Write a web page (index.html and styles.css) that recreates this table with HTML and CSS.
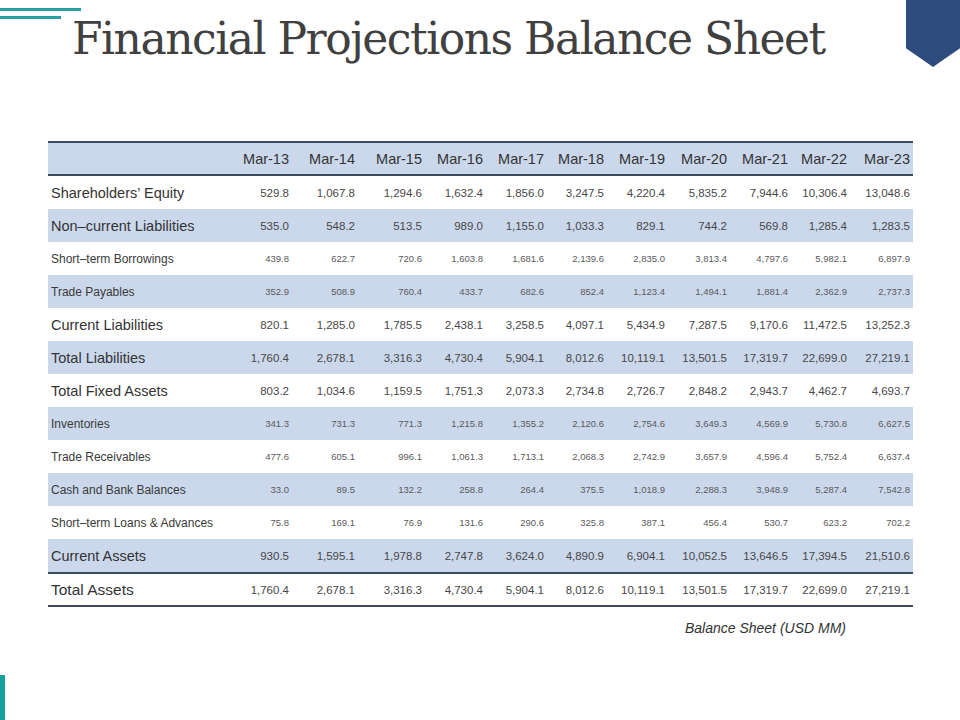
FILE: index.html
```html
<!DOCTYPE html>
<html lang="en">
<head>
<meta charset="utf-8">
<title>Financial Projections Balance Sheet</title>
<link rel="stylesheet" href="styles.css">
</head>
<body>
<div class="slide">
  <div class="accent-lines"><span class="line-long"></span><span class="line-short"></span></div>
  <div class="badge"></div>
  <div class="side-bar"></div>

  <h1 class="title">Financial Projections Balance Sheet</h1>

  <div class="sheet">
    <table class="balance">
      <colgroup>
        <col class="c-label"><col class="c-66"><col class="c-66"><col class="c-67"><col class="c-61"><col class="c-61"><col class="c-60"><col class="c-61"><col class="c-62"><col class="c-61"><col class="c-59"><col class="c-63">
      </colgroup>
      <thead>
        <tr><th class="label"></th><th>Mar-13</th><th>Mar-14</th><th>Mar-15</th><th>Mar-16</th><th>Mar-17</th><th>Mar-18</th><th>Mar-19</th><th>Mar-20</th><th>Mar-21</th><th>Mar-22</th><th>Mar-23</th></tr>
      </thead>
      <tbody>
        <tr class="big"><td class="label">Shareholders’ Equity</td><td>529.8</td><td>1,067.8</td><td>1,294.6</td><td>1,632.4</td><td>1,856.0</td><td>3,247.5</td><td>4,220.4</td><td>5,835.2</td><td>7,944.6</td><td>10,306.4</td><td>13,048.6</td></tr>
        <tr class="big alt"><td class="label">Non–current Liabilities</td><td>535.0</td><td>548.2</td><td>513.5</td><td>989.0</td><td>1,155.0</td><td>1,033.3</td><td>829.1</td><td>744.2</td><td>569.8</td><td>1,285.4</td><td>1,283.5</td></tr>
        <tr class="small"><td class="label">Short–term Borrowings</td><td>439.8</td><td>622.7</td><td>720.6</td><td>1,603.8</td><td>1,681.6</td><td>2,139.6</td><td>2,835.0</td><td>3,813.4</td><td>4,797.6</td><td>5,982.1</td><td>6,897.9</td></tr>
        <tr class="small alt"><td class="label">Trade Payables</td><td>352.9</td><td>508.9</td><td>760.4</td><td>433.7</td><td>682.6</td><td>852.4</td><td>1,123.4</td><td>1,494.1</td><td>1,881.4</td><td>2,362.9</td><td>2,737.3</td></tr>
        <tr class="big"><td class="label">Current Liabilities</td><td>820.1</td><td>1,285.0</td><td>1,785.5</td><td>2,438.1</td><td>3,258.5</td><td>4,097.1</td><td>5,434.9</td><td>7,287.5</td><td>9,170.6</td><td>11,472.5</td><td>13,252.3</td></tr>
        <tr class="big alt"><td class="label">Total Liabilities</td><td>1,760.4</td><td>2,678.1</td><td>3,316.3</td><td>4,730.4</td><td>5,904.1</td><td>8,012.6</td><td>10,119.1</td><td>13,501.5</td><td>17,319.7</td><td>22,699.0</td><td>27,219.1</td></tr>
        <tr class="big"><td class="label">Total Fixed Assets</td><td>803.2</td><td>1,034.6</td><td>1,159.5</td><td>1,751.3</td><td>2,073.3</td><td>2,734.8</td><td>2,726.7</td><td>2,848.2</td><td>2,943.7</td><td>4,462.7</td><td>4,693.7</td></tr>
        <tr class="small alt"><td class="label">Inventories</td><td>341.3</td><td>731.3</td><td>771.3</td><td>1,215.8</td><td>1,355.2</td><td>2,120.6</td><td>2,754.6</td><td>3,649.3</td><td>4,569.9</td><td>5,730.8</td><td>6,627.5</td></tr>
        <tr class="small"><td class="label">Trade Receivables</td><td>477.6</td><td>605.1</td><td>996.1</td><td>1,061.3</td><td>1,713.1</td><td>2,068.3</td><td>2,742.9</td><td>3,657.9</td><td>4,596.4</td><td>5,752.4</td><td>6,637.4</td></tr>
        <tr class="small alt"><td class="label">Cash and Bank Balances</td><td>33.0</td><td>89.5</td><td>132.2</td><td>258.8</td><td>264.4</td><td>375.5</td><td>1,018.9</td><td>2,288.3</td><td>3,948.9</td><td>5,287.4</td><td>7,542.8</td></tr>
        <tr class="small"><td class="label">Short–term Loans &amp; Advances</td><td>75.8</td><td>169.1</td><td>76.9</td><td>131.6</td><td>290.6</td><td>325.8</td><td>387.1</td><td>456.4</td><td>530.7</td><td>623.2</td><td>702.2</td></tr>
        <tr class="big alt"><td class="label">Current Assets</td><td>930.5</td><td>1,595.1</td><td>1,978.8</td><td>2,747.8</td><td>3,624.0</td><td>4,890.9</td><td>6,904.1</td><td>10,052.5</td><td>13,646.5</td><td>17,394.5</td><td>21,510.6</td></tr>
        <tr class="big total"><td class="label">Total Assets</td><td>1,760.4</td><td>2,678.1</td><td>3,316.3</td><td>4,730.4</td><td>5,904.1</td><td>8,012.6</td><td>10,119.1</td><td>13,501.5</td><td>17,319.7</td><td>22,699.0</td><td>27,219.1</td></tr>
      </tbody>
    </table>
    <p class="caption">Balance Sheet (USD MM)</p>
  </div>
</div>
</body>
</html>
```

FILE: styles.css
```css
* { box-sizing: border-box; }

html, body {
  margin: 0;
  padding: 0;
  background: #ffffff;
}

.slide {
  position: relative;
  width: 960px;
  height: 720px;
  overflow: hidden;
  font-family: "Liberation Sans", Arial, sans-serif;
  color: #333333;
}

/* decorations */
.accent-lines {
  position: absolute;
  left: 0;
  top: 8px;
  display: flex;
  flex-direction: column;
  gap: 5px;
}
.line-long, .line-short {
  display: block;
  height: 3px;
  background: #2a9fa1;
}
.line-long { width: 81px; }
.line-short { width: 61px; }

.badge {
  position: absolute;
  right: 0;
  top: 0;
  width: 54px;
  height: 67px;
  background: #2d4b7c;
  clip-path: polygon(0 0, 100% 0, 100% 72%, 50% 100%, 0 72%);
}

.side-bar {
  position: absolute;
  left: 0;
  bottom: 0;
  width: 5px;
  height: 45px;
  background: #17a19c;
}

/* title */
.title {
  margin: 0;
  padding: 11px 0 0 72px;
  font-family: "DejaVu Serif", Georgia, serif;
  font-weight: normal;
  font-size: 44px;
  line-height: 56px;
  color: #404040;
  letter-spacing: -1.5px;
}

/* table */
.sheet {
  margin: 74px 0 0 48px;
  width: 865px;
}

.balance {
  width: 865px;
  table-layout: fixed;
  border-collapse: separate;
  border-spacing: 0;
}

.c-label { width: 178px; }
.c-66 { width: 66px; }
.c-67 { width: 67px; }
.c-61 { width: 61px; }
.c-60 { width: 60px; }
.c-62 { width: 62px; }
.c-59 { width: 59px; }
.c-63 { width: 63px; }

.balance th,
.balance td {
  padding: 0 3px 0 0;
  text-align: right;
  vertical-align: middle;
  white-space: nowrap;
}

.balance th.label,
.balance td.label {
  text-align: left;
  padding: 0 0 0 3px;
}

.balance thead th {
  height: 35px;
  background: #cbd8eb;
  border-top: 2px solid #3b4a5e;
  border-bottom: 2px solid #3b4a5e;
  font-weight: normal;
  font-size: 14.5px;
  color: #333333;
}

.balance tbody td { height: 33px; }

.balance tr.alt td { background: #cbd8eb; }

.balance tr.big td.label {
  font-size: 14.5px;
  color: #333333;
}
.balance tr.big td {
  font-size: 11.5px;
  color: #474747;
}

.balance tr.small td.label {
  font-size: 12px;
  color: #3a3a3a;
}
.balance tr.small td {
  font-size: 9.5px;
  color: #5a5a5a;
}

.balance tr.total td {
  height: 35px;
  border-top: 2px solid #3b4a5e;
  border-bottom: 2px solid #3b4a5e;
}
.balance tr.total td.label { font-size: 15.5px; }

.caption {
  margin: 13px 0 0;
  padding-right: 67px;
  text-align: right;
  font-style: italic;
  font-size: 14px;
  line-height: 16px;
  color: #333333;
}
```
